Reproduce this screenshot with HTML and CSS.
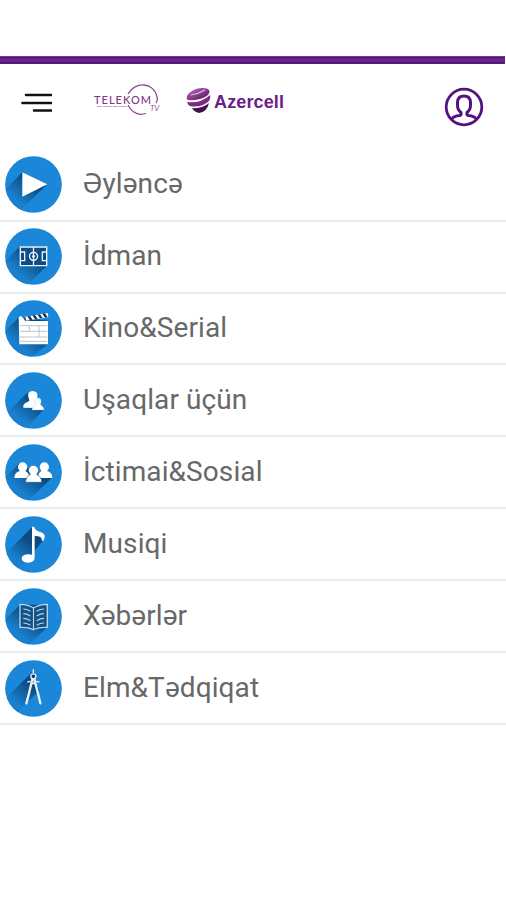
FILE: index.html
```html
<!DOCTYPE html>
<html lang="az">
<head>
<meta charset="utf-8">
<title>Telekom TV</title>
<link rel="stylesheet" href="styles.css">
</head>
<body>
<svg class="defs" width="0" height="0" aria-hidden="true">
  <defs>
    <linearGradient id="shade" gradientUnits="userSpaceOnUse" x1="95" y1="95" x2="50" y2="150">
      <stop offset="0" stop-color="#0c4a80"/>
      <stop offset="1" stop-color="#1a80ce"/>
    </linearGradient>
    <clipPath id="disc"><circle cx="100.500" cy="103.500" r="85"/></clipPath>
  </defs>
</svg>
<div class="status"></div>
<div class="stripe"></div>
<header class="bar">
  <svg class="menu" viewBox="0 0 31 20"><path d="M5 2h25M1.500 10h28.500M13 17.500h17" stroke="#111" stroke-width="2.600" stroke-linecap="round"/></svg>
  <svg class="telekom" viewBox="0 0 68 34">
    <g fill="none" stroke="#8d4795" stroke-width="1.300">
      <path d="M35 10C42-3 61-2 64 13Q65 16 63 19"/>
      <path d="M35 21Q41 33 53 29.500"/>
    </g>
    <text x="1" y="19.500" textLength="57" class="brand-thin">TELEKOM</text>
    <path d="M4 22.500h30" stroke="#b58cbb" stroke-width=".8" stroke-dasharray="5 1 9 .7"/>
    <text x="57" y="27" class="brand-tv">TV</text>
  </svg>
  <svg class="azercell" viewBox="0 0 102 30">
    <defs>
      <linearGradient id="orb" x1="0" y1="0" x2="1" y2="1"><stop offset="0" stop-color="#b478bb"/><stop offset=".5" stop-color="#8b3c93"/><stop offset="1" stop-color="#48104f"/></linearGradient>
    </defs>
    <path d="M2 10C5 4 16 0 23 3Q26 5 23 9Q16 15 3 14Q1 13 2 10Z" fill="url(#orb)"/>
    <path d="M2 16Q15 18 25 9Q26 13 23 16Q15 22 5 20Q3 19 2 16Z" fill="#7b2b83"/>
    <path d="M7 22Q17 23 24 17Q22 26 14 27Q9 26 7 22Z" fill="#41104a"/>
    <path d="M6 9Q13 8 20 4" stroke="#e0c4e4" stroke-width="1.200" fill="none"/>
    <text x="29" y="21.500" textLength="70" class="brand-bold">Azercell</text>
  </svg>
  <svg class="user" viewBox="0 0 40 40" fill="none" stroke="#55127f" stroke-width="2.800">
    <circle cx="20" cy="20" r="17.800"/>
    <path d="M7.500 32Q10 29 15.500 28.500Q17.500 28 17 25.500Q13.500 23 13.500 18V15Q14 9 20 9T26.500 15V18Q26.500 23 23 25.500Q22.500 28 24.500 28.500Q30 29 32.500 32" stroke-width="3"/>
  </svg>
</header>
<main class="list">
  <div class="row">
    <svg class="icon" viewBox="15 18 171 171"><circle cx="100.500" cy="103.500" r="85" fill="#1b87d8"/>
      <path clip-path="url(#disc)" d="M67 67L10 124 20 220 142 103Z" fill="url(#shade)"/>
      <path d="M67 67L142 103L67 140Z" fill="#fff"/></svg>
    <span class="label">Əyləncə</span>
  </div>
  <div class="row">
    <svg class="icon" viewBox="15 18 171 171"><circle cx="100.500" cy="103.500" r="85" fill="#1b87d8"/>
      <path clip-path="url(#disc)" d="M60 73L0 133 30 240 141 131V73Z" fill="url(#shade)"/>
      <g fill="#0f4c83" stroke="#e9f6ff" stroke-width="4"><path d="M61 75H140V131H61Z"/><path d="M100.500 75V131M61 90H74V116H61M140 90H127V116H140" fill="none"/><circle cx="100.500" cy="103" r="12" fill="none"/></g><circle cx="100.500" cy="103" r="4" fill="#fff"/></svg>
    <span class="label">İdman</span>
  </div>
  <div class="row">
    <svg class="icon" viewBox="15 18 171 171"><circle cx="100.500" cy="103.500" r="85" fill="#1b87d8"/>
      <path clip-path="url(#disc)" d="M57 70L0 127 30 240 144 150V80Z" fill="url(#shade)"/>
      <path d="M56 70L62 66 69 71 76 81H144V151H58Z" fill="#fff"/>
      <path d="M76 68L143 57L145 70L79 80Z" fill="#fff"/>
      <path d="M82 67L90 66 98 77 90 79ZM97 64L105 63 113 74 105 76ZM112 62L120 61 128 72 120 73ZM127 59L135 58 143 70 135 71Z" fill="#12375b"/>
      <path d="M60 95H142M60 112H142M60 129H142M60 142H142M88 95V112M117 95V129" stroke="#adbac5" stroke-width="2.500"/></svg>
    <span class="label">Kino&amp;Serial</span>
  </div>
  <div class="row">
    <svg class="icon" viewBox="15 18 171 171"><circle cx="100.500" cy="103.500" r="85" fill="#1b87d8"/>
      <path clip-path="url(#disc)" d="M82 80L15 145 40 225 131 132Z" fill="url(#shade)"/>
      <path d="M70 125Q68 113 82 108Q90 106 87 99Q78 77 97 75Q115 75 112 93Q111 101 107 106L111 126Z" fill="#fff"/>
      <path d="M96 132Q96 123 105 120Q109 117 106 112Q101 97 114 95Q127 97 122 113Q121 118 126 120Q132 124 132 132Z" fill="#fff" stroke="#8fb6d5" stroke-width="1"/></svg>
    <span class="label">Uşaqlar üçün</span>
  </div>
  <div class="row">
    <svg class="icon" viewBox="15 18 171 171"><circle cx="100.500" cy="103.500" r="85" fill="#1b87d8"/>
      <path clip-path="url(#disc)" d="M57 77L10 124 30 240 156 119Z" fill="url(#shade)"/>
      <g fill="#fff"><circle cx="68" cy="87" r="14"/><circle cx="133" cy="87" r="14"/><path d="M43 120Q43 103 59 99H76Q86 104 90 120ZM112 120Q114 104 125 99H142Q157 104 157 120Z"/></g>
      <g fill="#fff" stroke="#155c98" stroke-width="2"><path d="M76 133Q77 116 90 110H111Q125 116 125 133Z"/><circle cx="100.500" cy="97" r="15"/></g><path d="M91 108H110V114H91Z" fill="#fff"/></svg>
    <span class="label">İctimai&amp;Sosial</span>
  </div>
  <div class="row">
    <svg class="icon" viewBox="15 18 171 171"><circle cx="100.500" cy="103.500" r="85" fill="#1b87d8"/>
      <path clip-path="url(#disc)" d="M97 50L5 142 50 175 78 157 129 91Z" fill="url(#shade)"/>
      <path d="M96 50H102Q106 63 127 68Q140 75 130 93L125 91Q128 78 104 78V142Q104 158 84 158Q64 157 65 144Q69 130 96 134Z" fill="#fff"/></svg>
    <span class="label">Musiqi</span>
  </div>
  <div class="row">
    <svg class="icon" viewBox="15 18 171 171"><circle cx="100.500" cy="103.500" r="85" fill="#1b87d8"/>
      <path clip-path="url(#disc)" d="M60 68L0 128 30 240 142 136V68Z" fill="url(#shade)"/>
      <path d="M60 67Q85 67 100.500 78Q116 67 142 67V136Q116 135 100.500 143Q85 135 60 136Z" fill="#135488" stroke="#b9d4e8" stroke-width="4"/>
      <path d="M100.500 78V142M70 81Q80 81 91 88M70 95Q80 95 91 102M70 109Q80 109 91 116M70 123Q80 123 91 130M132 81Q121 81 110 88M132 95Q121 95 110 102M132 109Q121 109 110 116M132 123Q121 123 110 130" fill="none" stroke="#b9d4e8" stroke-width="3.500"/></svg>
    <span class="label">Xəbərlər</span>
  </div>
  <div class="row">
    <svg class="icon" viewBox="15 18 171 171"><circle cx="100.500" cy="103.500" r="85" fill="#1b87d8"/>
      <path clip-path="url(#disc)" d="M96 55L0 150 50 180 76 150 118 110Z" fill="url(#shade)"/>
      <path d="M97 76L86 122 79 148M103 76L115 122 121 148" fill="none" stroke="#e8f0f6" stroke-width="7" stroke-linecap="round"/>
      <path d="M100 46V58M82 84L91 82M109 82L118 84M90 94L100 87 110 94" fill="none" stroke="#e8f0f6" stroke-width="4"/>
      <circle cx="100" cy="67" r="7.500" fill="#12375b" stroke="#e8f0f6" stroke-width="4"/></svg>
    <span class="label">Elm&amp;Tədqiqat</span>
  </div>
</main>
</body>
</html>
```
FILE: styles.css
```css
body {
  margin: 0;
  background: #fff;
  font-family: Roboto, "Noto Sans", sans-serif;
}
.defs { display: block; }
.status { height: 56px; }
.stripe {
  height: 8px;
  margin-right: 1px;
  background: linear-gradient(#743c94 0 1px, #4f0f78 1px 2px, #672689 2px 6px, #4f0f78 6px 7px, #5b1d80 7px);
}
.bar {
  display: flex;
  align-items: flex-start;
  height: 78px;
  box-sizing: border-box;
  padding: 20px 0 0 21px;
}
.menu { width: 31px; height: 20px; margin-top: 9px; }
.telekom { width: 68px; height: 34px; margin-left: 41px; }
.azercell { width: 102px; height: 30px; margin: 2px 0 0 24px; }
.user { width: 40px; height: 40px; margin: 3px 0 0 157px; }
.brand-thin { font: 500 11px Lato, sans-serif; fill: #813787; }
.brand-tv { font: italic 8px Lato, sans-serif; fill: #9a55a0; }
.brand-bold { font: bold 18px "Liberation Sans", sans-serif; fill: #6a2088; }
.list { padding-top: 8px; }
.row {
  display: flex;
  align-items: center;
  gap: 21px;
  height: 72px;
  box-sizing: border-box;
  padding: 0 0 1px 5px;
  border-bottom: 2px solid #ededed;
}
.row:nth-child(3) { height: 71px; padding-bottom: 0; }
.row:nth-child(n+4) { padding-top: 1px; padding-bottom: 0; }
.icon { width: 57px; height: 57px; }
.label {
  margin-bottom: 2px;
  font-size: 28px;
  line-height: 34px;
  letter-spacing: 0.1px;
  color: #686868;
  white-space: nowrap;
}
```
